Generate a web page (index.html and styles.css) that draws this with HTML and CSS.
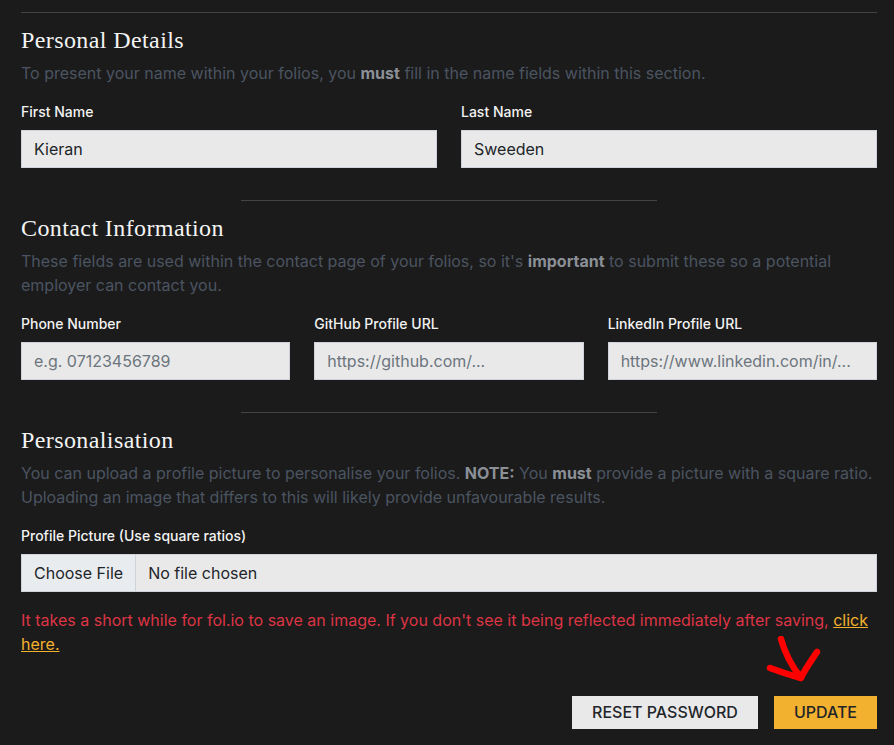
FILE: index.html
```html
<!DOCTYPE html>
<html lang="en">
<head>
<meta charset="utf-8">
<title>Profile</title>
<link rel="stylesheet" href="styles.css">
</head>
<body>
<main class="page">
  <hr class="rule rule-full">

  <section class="section">
    <h2 class="section-title">Personal Details</h2>
    <p class="section-desc">To present your name within your folios, you <strong>must</strong> fill in the name fields within this section.</p>
    <div class="row row-2">
      <div class="field">
        <label class="field-label">First Name</label>
        <div class="input">Kieran</div>
      </div>
      <div class="field">
        <label class="field-label">Last Name</label>
        <div class="input">Sweeden</div>
      </div>
    </div>
  </section>

  <hr class="rule rule-half">

  <section class="section">
    <h2 class="section-title">Contact Information</h2>
    <p class="section-desc">These fields are used within the contact page of your folios, so it's <strong>important</strong> to submit these so a potential employer can contact you.</p>
    <div class="row row-3">
      <div class="field">
        <label class="field-label">Phone Number</label>
        <div class="input placeholder">e.g. 07123456789</div>
      </div>
      <div class="field">
        <label class="field-label">GitHub Profile URL</label>
        <div class="input placeholder">https://github.com/...</div>
      </div>
      <div class="field">
        <label class="field-label">LinkedIn Profile URL</label>
        <div class="input placeholder">https://www.linkedin.com/in/...</div>
      </div>
    </div>
  </section>

  <hr class="rule rule-half">

  <section class="section">
    <h2 class="section-title">Personalisation</h2>
    <p class="section-desc">You can upload a profile picture to personalise your folios. <strong>NOTE:</strong> You <strong>must</strong> provide a picture with a square ratio. Uploading an image that differs to this will likely provide unfavourable results.</p>
    <div class="field">
      <label class="field-label">Profile Picture (Use square ratios)</label>
      <div class="input file-input">
        <span class="file-btn">Choose File</span>
        <span class="file-name">No file chosen</span>
      </div>
    </div>
    <p class="warning">It takes a short while for fol.io to save an image. If you don't see it being reflected immediately after saving, <a class="warning-link" href="#">click here.</a></p>
  </section>

  <div class="actions">
    <button class="btn btn-light" type="button">Reset Password</button>
    <button class="btn btn-warning" type="button">Update</button>
    <svg class="scribble" width="60" height="56" viewBox="0 0 60 56">
      <path d="M15 3 C18 14 24 28 35 42 M4 32 C15 36 27 40 35 42 C39 33 45 25 51 16" fill="none" stroke="#ff0000" stroke-width="6.5" stroke-linecap="round" stroke-linejoin="round"/>
    </svg>
  </div>
</main>
</body>
</html>
```

FILE: styles.css
```css
* { box-sizing: border-box; }

html, body {
  margin: 0;
  padding: 0;
  background: #1b1b1b;
}

body {
  font-family: Inter, "Noto Sans", sans-serif;
  color: #e8e8e8;
}

.page {
  padding: 12px 17px 0 21px;
  width: 894px;
}

.rule {
  border: 0;
  border-top: 1px solid #444444;
  margin: 0;
  height: 0;
}

.rule-half {
  width: 416px;
  margin: 32px auto 0;
}

.section-title {
  font-family: "Liberation Serif", "DejaVu Serif", serif;
  font-weight: 400;
  font-size: 24px;
  letter-spacing: 0.4px;
  line-height: 28px;
  color: #f4f4f4;
  margin: 13px 0 0;
}

.section-desc {
  margin: 7px 0 0;
  font-size: 16px;
  line-height: 24px;
  color: #4b5461;
}

.section-desc strong {
  color: #8b9097;
  font-weight: 700;
}

.row {
  display: grid;
  gap: 24px;
}

.row-2 { grid-template-columns: 1fr 1fr; }
.row-3 { grid-template-columns: 1fr 1fr 1fr; }

.field {
  margin-top: 17px;
  display: flex;
  flex-direction: column;
}

.field-label {
  font-size: 14px;
  line-height: 20px;
  font-weight: 500;
  color: #f2f2f2;
  margin-bottom: 8px;
}

.input {
  height: 38px;
  background: #e9e9e9;
  border: 1px solid #cfd4da;
  padding: 0 12px;
  font-size: 16px;
  line-height: 36px;
  color: #212529;
  white-space: nowrap;
  overflow: hidden;
}

.input.placeholder { color: #6c757d; }

.file-input {
  display: flex;
  padding: 0;
}

.file-btn {
  background: #e9ecef;
  border-right: 1px solid #cfd4da;
  padding: 0 12px;
}

.file-name {
  padding: 0 12px;
}

.warning {
  margin: 16px 0 0;
  font-size: 16px;
  line-height: 24px;
  color: #dc3545;
}

.warning-link {
  color: #f2b12e;
  text-decoration: underline;
}

.actions {
  position: relative;
  display: flex;
  justify-content: flex-end;
  gap: 16px;
  margin-top: 40px;
}

.btn {
  font-family: Inter, "Noto Sans", sans-serif;
  font-size: 16px;
  font-weight: 500;
  line-height: 21px;
  text-transform: uppercase;
  color: #212529;
  border: 0;
  padding: 6px 20px;
  height: 33px;
}

.btn-light { background: #e9e9e9; }
.btn-warning { background: #f2b12e; }

.scribble {
  position: absolute;
  left: 745px;
  top: -60px;
}
```
